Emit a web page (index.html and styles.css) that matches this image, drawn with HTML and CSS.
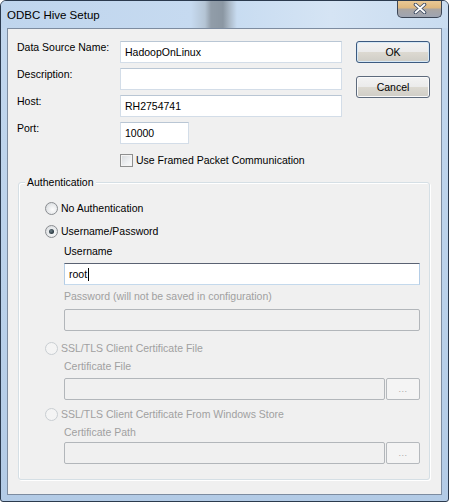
FILE: index.html
```html
<!DOCTYPE html>
<html>
<head>
<meta charset="utf-8">
<title>ODBC Hive Setup</title>
<link rel="stylesheet" href="styles.css">
</head>
<body>
<div class="window">
  <div class="titlebar">
    <span class="title">ODBC Hive Setup</span>
    <div class="close">
      <svg width="14" height="11" viewBox="0 0 14 11">
        <path d="M2.5 1.5 L11.5 9.5 M11.5 1.5 L2.5 9.5" stroke="#3b4a63" stroke-width="3.6" stroke-linecap="round" fill="none"/>
        <path d="M2.5 1.5 L11.5 9.5 M11.5 1.5 L2.5 9.5" stroke="#ffffff" stroke-width="1.8" stroke-linecap="round" fill="none"/>
      </svg>
    </div>
  </div>
  <div class="client">
    <div class="top">
      <div class="form">
        <div class="row"><span class="lbl">Data Source Name:</span><div class="input long">HadoopOnLinux</div></div>
        <div class="row"><span class="lbl">Description:</span><div class="input long"></div></div>
        <div class="row"><span class="lbl">Host:</span><div class="input long">RH2754741</div></div>
        <div class="row"><span class="lbl">Port:</span><div class="input port">10000</div></div>
        <div class="checkrow"><span class="checkbox"></span><span>Use Framed Packet Communication</span></div>
      </div>
      <div class="buttons">
        <div class="btn default">OK</div>
        <div class="btn">Cancel</div>
      </div>
    </div>
    <div class="group">
      <span class="legend">Authentication</span>
      <div class="radiorow r1"><span class="radio"></span><span>No Authentication</span></div>
      <div class="radiorow r2"><span class="radio checked"></span><span>Username/Password</span></div>
      <div class="indent">
        <div class="sublbl s-user">Username</div>
        <div class="input wide focused i-user">root<span class="caret"></span></div>
        <div class="sublbl disabled s-pass">Password (will not be saved in configuration)</div>
        <div class="input wide off i-pass"></div>
      </div>
      <div class="radiorow disabled r3"><span class="radio off"></span><span>SSL/TLS Client Certificate File</span></div>
      <div class="indent">
        <div class="sublbl disabled s-cert">Certificate File</div>
        <div class="browse i-cert"><div class="input path off"></div><div class="dots">...</div></div>
      </div>
      <div class="radiorow disabled r4"><span class="radio off"></span><span>SSL/TLS Client Certificate From Windows Store</span></div>
      <div class="indent">
        <div class="sublbl disabled s-path">Certificate Path</div>
        <div class="browse i-path"><div class="input path off"></div><div class="dots">...</div></div>
      </div>
    </div>
  </div>
</div>
</body>
</html>
```
FILE: styles.css
```css
* { box-sizing: border-box; }
html, body { margin: 0; padding: 0; }
body {
  width: 449px;
  height: 502px;
  overflow: hidden;
  background: #ffffff;
  font-family: "Liberation Sans", Arial, sans-serif;
  font-size: 10.5px;
  color: #000;
}

.window {
  width: 449px;
  height: 502px;
  border: 1px solid #2b3a4e;
  border-radius: 6px 6px 3px 3px;
  background: linear-gradient(180deg, #c2d7ee 0%, #bad1ea 60%, #b3cbe6 100%);
  padding: 0 6px 6px;
  display: flex;
  flex-direction: column;
  overflow: hidden;
}

.titlebar {
  height: 27px;
  margin: 0 -6px;
  padding: 0 6px;
  display: flex;
  justify-content: space-between;
  align-items: flex-start;
  background: linear-gradient(90deg, #bfd5ed 0px, #c6daf0 190px, #b4c4d4 204px, #919da9 210px, #8b97a3 222px, #a9b7c5 228px, #c8dcf1 236px, #d5e4f4 330px, #c9dcf0 447px);
}
.title {
  font-size: 11.5px;
  line-height: 14px;
  padding-top: 7px;
  color: #000;
}
.close {
  width: 45px;
  height: 18px;
  margin-top: -1px;
  border: 1px solid #3c4656;
  border-top: none;
  border-radius: 0 0 5px 5px;
  background: linear-gradient(180deg, #ebcb98 0%, #dfb87f 46%, #a9a5a2 54%, #9ea4b2 100%);
  display: flex;
  align-items: center;
  justify-content: center;
}

.client {
  flex: 1;
  border: 1px solid #7d8ca0;
  background: #f0f0f0;
}

.top {
  display: flex;
  padding: 12px 0 0 9px;
}
.row {
  display: flex;
  align-items: flex-start;
}
.row + .row { margin-top: 5px; }
.lbl {
  width: 103px;
  line-height: 13px;
}

.input {
  height: 22px;
  background: #fff;
  border: 1px solid #d3dde8;
  border-top-color: #b9c6d4;
  padding-left: 4px;
  line-height: 20px;
  display: flex;
  align-items: center;
}
.input.long { width: 222px; }
.input.port { width: 69px; }
.input.wide { width: 356px; }
.input.path { width: 321px; }
.input.focused {
  border-color: #b4cde6;
  border-top-color: #5a6272;
  border-bottom-color: #c4d9ec;
}
.input.off {
  background: #f0f0f0;
  border: 1px solid #b2b6ba;
  border-radius: 2px;
}
.caret {
  display: inline-block;
  width: 1px;
  height: 13px;
  background: #000;
  margin-left: 1px;
}

.checkrow {
  margin-top: 10px;
  padding-left: 103px;
  display: flex;
  align-items: center;
  gap: 3px;
  line-height: 13px;
}
.checkbox {
  width: 13px;
  height: 13px;
  border: 1px solid #8e8f8f;
  background: linear-gradient(135deg, #d6d9dc 0%, #eef0f2 60%, #fbfbfb 100%);
  box-shadow: inset 0 0 0 1px #f4f4f4;
}

.buttons {
  margin-left: 14px;
  display: flex;
  flex-direction: column;
  gap: 13px;
}
.btn {
  width: 74px;
  height: 22px;
  border: 1px solid #5d6a7c;
  border-radius: 3px;
  background: linear-gradient(180deg, #f3f3f3 0%, #ebebeb 48%, #dcd9d1 52%, #cfcdc6 100%);
  display: flex;
  align-items: center;
  justify-content: center;
  box-shadow: inset 0 0 0 1px #fafafa;
}
.btn.default {
  border-color: #3c5a80;
  box-shadow: inset 0 0 0 1px #d6e8f6;
}

.group {
  position: relative;
  margin: 15px 11px 0 10px;
  border: 1px solid #d5dfe5;
  border-radius: 3px;
  box-shadow: inset 1px 1px 0 #ffffff, 1px 1px 0 #ffffff;
  padding: 18px 0 15px 26px;
}
.legend {
  position: absolute;
  top: -7px;
  left: 6px;
  padding: 0 2px;
  background: #f0f0f0;
  line-height: 13px;
}

.radiorow {
  display: flex;
  align-items: center;
  gap: 3px;
  line-height: 14px;
}
.r2 { margin-top: 9px; }
.r3 { margin-top: 10px; }
.r4 { margin-top: 7px; }
.radio {
  width: 13px;
  height: 13px;
  border-radius: 50%;
  border: 1px solid #8a8d91;
  background: radial-gradient(circle at 60% 60%, #fdfdfd 0%, #e6e8ea 55%, #cdd1d5 100%);
  display: flex;
  align-items: center;
  justify-content: center;
}
.radio.checked::after {
  content: "";
  width: 5px;
  height: 5px;
  border-radius: 50%;
  background: radial-gradient(circle at 40% 40%, #6d7f88 0%, #26343c 70%);
}
.radio.off {
  border-color: #c9ced2;
  background: #f4f4f4;
}
.disabled { color: #a0a0a0; }

.indent { margin-left: 19px; }
.sublbl { line-height: 14px; }
.s-user { margin-top: 6px; }
.i-user { margin-top: 5px; }
.s-pass { margin-top: 4px; }
.i-pass { margin-top: 6px; }
.s-cert { margin-top: 4px; }
.i-cert { margin-top: 5px; }
.s-path { margin-top: 4px; }
.i-path { margin-top: 3px; }

.browse {
  display: flex;
  gap: 1px;
}
.dots {
  width: 34px;
  height: 22px;
  border: 1px solid #b5b9bd;
  border-radius: 2px;
  background: #f4f4f4;
  color: #a8a8a8;
  font-size: 9px;
  display: flex;
  align-items: center;
  justify-content: center;
  letter-spacing: 0.5px;
}
```
